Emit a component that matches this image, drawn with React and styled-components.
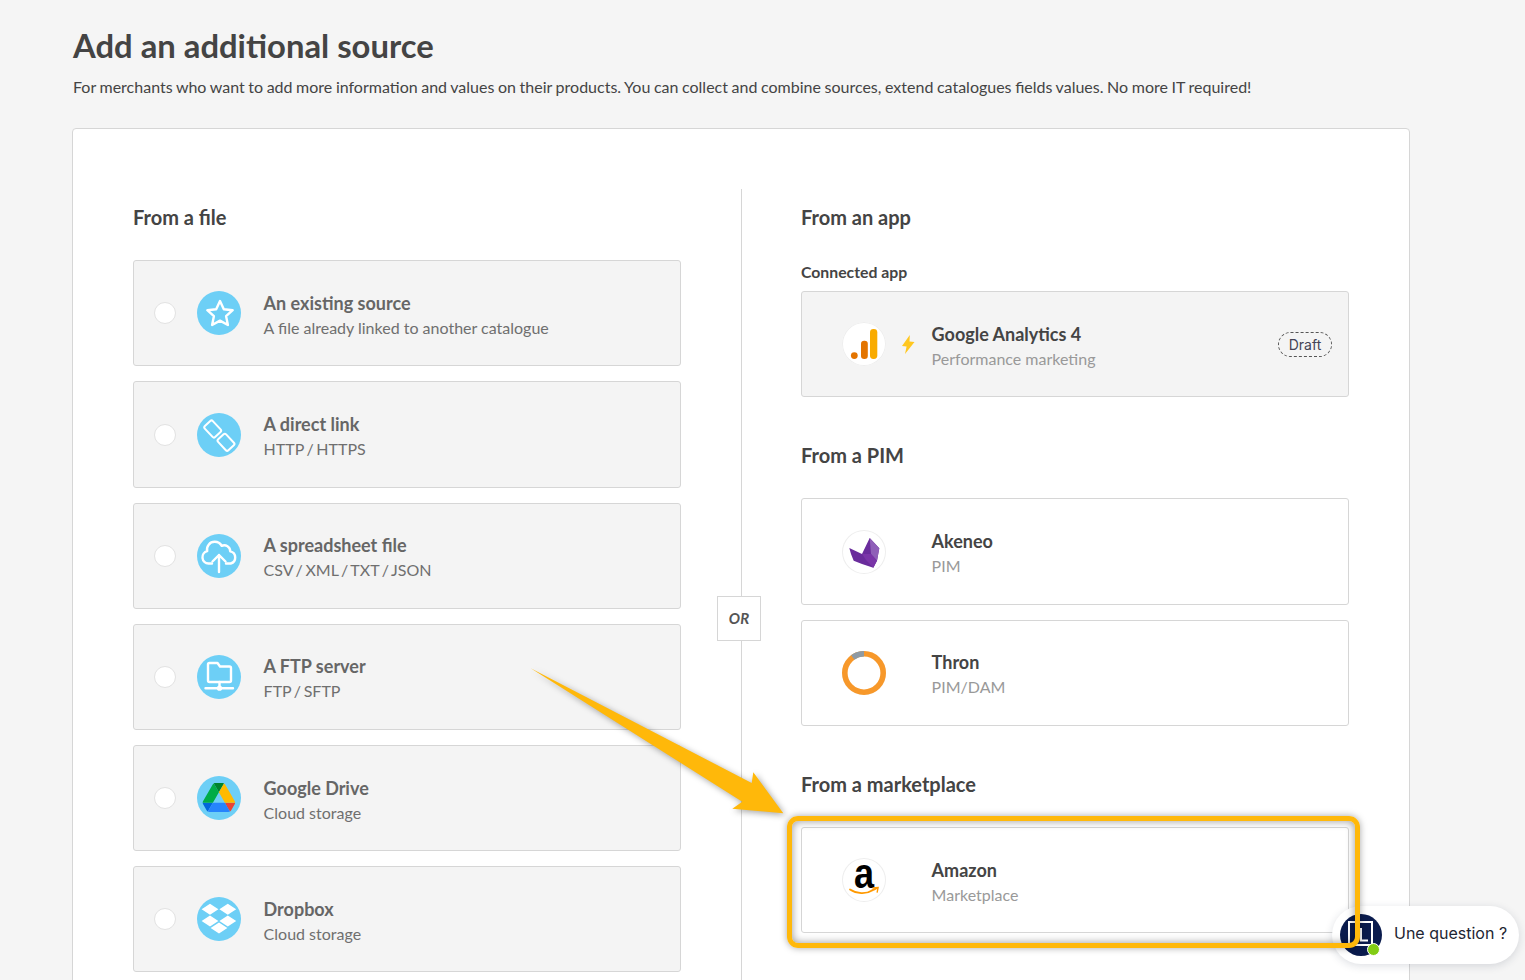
import React from "react";
import styled, { createGlobalStyle } from "styled-components";

const Global = createGlobalStyle`
  html, body { margin: 0; padding: 0; height: 980px; overflow: hidden; background: #f5f5f5; }
  body { font-family: Lato, "Liberation Sans", sans-serif; color: #444; }
  * { box-sizing: border-box; }
`;

const Page = styled.div`
  position: relative;
  height: 980px;
  overflow: hidden;
  padding: 26px 115px 0 72px;
`;
const Header = styled.header`
  padding-left: 1px;
`;
const Title = styled.h1`
  margin: 0;
  font-size: 32.8px;
  line-height: 40px;
  font-weight: 700;
  color: #444;
`;
const Lead = styled.p`
  margin: 10px 0 0;
  font-size: 16px;
  line-height: 22px;
  color: #444;
  word-spacing: -0.5px;
`;
const Panel = styled.section`
  margin-top: 30px;
  background: #fff;
  border: 1px solid #d6d6d6;
  border-radius: 4px;
  padding: 60px;
  display: grid;
  grid-template-columns: 548px 120px 548px;
  min-height: 980px;
`;
const Column = styled.div`
  padding-top: 15px;
  display: flex;
  flex-direction: column;
`;
const Divider = styled.div`
  position: relative;
  height: 858px;
  display: flex;
  justify-content: center;
  &::before {
    content: "";
    width: 1px;
    background: #d6d6d6;
  }
`;
const OrBox = styled.div`
  position: absolute;
  left: 36px;
  top: 407px;
  width: 44px;
  height: 45px;
  display: flex;
  align-items: center;
  justify-content: center;
  padding-bottom: 1px;
  background: #fff;
  border: 1px solid #d6d6d6;
  font-size: 15px;
  font-style: italic;
  font-weight: 700;
  color: #555;
`;
const Heading = styled.h2`
  margin: ${(p) => (p.$first ? "0" : "45px")} 0 30.3px;
  font-size: 20px;
  line-height: 26px;
  font-weight: 700;
  color: #444;
`;
const Label = styled.div`
  font-size: 15.8px;
  line-height: 18px;
  font-weight: 700;
  color: #444;
  padding-top: 3px;
  margin-bottom: 9.7px;
`;
const Stack = styled.div`
  display: flex;
  flex-direction: column;
  gap: 15px;
`;
const Card = styled.div`
  height: 106.2px;
  display: flex;
  align-items: center;
  padding: 0 16px 0 ${(p) => (p.$file ? 20 : 40)}px;
  border: 1px solid #d6d6d6;
  border-radius: 3px;
  background: ${(p) => (p.$muted ? "#f4f4f4" : "#fff")};
`;
const Radio = styled.span`
  flex: none;
  width: 22px;
  height: 22px;
  margin-right: 21px;
  border-radius: 50%;
  background: #fff;
  border: 1px solid #e2e2e2;
`;
const IconCircle = styled.span`
  flex: none;
  width: 44px;
  height: 44px;
  border-radius: 50%;
  display: block;
  background: ${(p) => (p.$blue ? "#6dcff6" : "#fff")};
  box-shadow: ${(p) => (p.$ring ? "inset 0 0 0 1px #eee" : "none")};
  svg { display: block; width: 44px; height: 44px; overflow: visible; }
`;
const Slot = styled.span`
  flex: none;
  width: ${(p) => p.$w}px;
  display: flex;
  align-items: center;
  justify-content: center;
`;
const Texts = styled.div`
  padding-top: 4px;
  min-width: 0;
`;
const Name = styled.div`
  font-size: 18px;
  line-height: 25px;
  font-weight: 700;
  color: ${(p) => (p.$muted ? "#666" : "#444")};
`;
const Sub = styled.div`
  font-size: 16px;
  line-height: 24px;
  word-spacing: ${(p) => p.$ws || 0}px;
  color: ${(p) => (p.$muted ? "#6f6f6f" : "#999")};
`;
const Draft = styled.span`
  margin-left: auto;
  width: 54px;
  height: 25px;
  display: flex;
  align-items: center;
  justify-content: center;
  border: 1px dashed #555;
  border-radius: 12.5px;
  font-family: Inter, sans-serif;
  font-size: 14px;
  color: #445;
`;
const Highlight = styled.div`
  position: absolute;
  left: 787px;
  top: 816px;
  width: 573px;
  height: 132px;
  border: 5px solid #ffb80a;
  border-radius: 11px;
  box-shadow: 0 0 7px rgba(0, 0, 0, 0.35), inset 0 0 8px rgba(0, 0, 0, 0.42);
  z-index: 3;
`;
const Arrow = styled.svg`
  position: absolute;
  left: 520px;
  top: 660px;
  z-index: 3;
  overflow: visible;
  filter: drop-shadow(2px 2px 3px rgba(0, 0, 0, 0.35));
`;
const Chat = styled.div`
  position: absolute;
  left: 1332px;
  top: 906px;
  width: 187px;
  height: 58px;
  border-radius: 29px;
  background: #fff;
  box-shadow: 0 2px 8px rgba(30, 40, 70, 0.15);
  display: flex;
  align-items: center;
  padding-left: 8px;
  z-index: 2;
`;
const Avatar = styled.span`
  position: relative;
  flex: none;
  width: 42px;
  height: 42px;
  margin-right: 12px;
  svg { display: block; }
`;
const Online = styled.i`
  position: absolute;
  right: 2px;
  bottom: 0;
  width: 13px;
  height: 13px;
  border-radius: 50%;
  background: #82cc14;
  border: 1.5px solid #fff;
`;
const ChatText = styled.span`
  font-family: Inter, sans-serif;
  font-size: 16px;
  color: #1e2533;
  white-space: nowrap;
  padding-bottom: 4px;
`;

const W = { fill: "none", stroke: "#fff", strokeWidth: 2.4, strokeLinecap: "round", strokeLinejoin: "round" };

const StarIcon = () => (
  <svg viewBox="0 0 44 44">
    <path {...W} d="M23 10l3.800 8.200 8.900 1-6.600 6 1.800 8.800-7.900-4.400-7.900 4.400 1.800-8.800-6.600-6 8.900-1z" />
  </svg>
);
const LinkIcon = () => (
  <svg viewBox="0 0 44 44">
    <g fill="none" stroke="#fff" strokeWidth="2" strokeLinejoin="round">
      <rect x="8.200" y="10.500" width="15" height="11" rx="1.800" transform="rotate(47 15.700 16)" />
      <rect x="21.500" y="23.800" width="15" height="11" rx="1.800" transform="rotate(47 29 29.300)" />
    </g>
  </svg>
);
const CloudIcon = () => (
  <svg viewBox="0 0 44 44">
    <g {...W}>
      <path d="M15 29.500h-3.500a6.300 6.300 0 0 1-1.300-12.400 7.600 7.600 0 0 1 7.500-9.300 8 8 0 0 1 7 4 6 6 0 0 1 8.500 5.500 6.300 6.300 0 0 1 .5 12.200H29" />
      <path d="M22 38V21M15.500 27.500L22 21l6.500 6.500" />
    </g>
  </svg>
);
const FtpIcon = () => (
  <svg viewBox="0 0 44 44">
    <g {...W}>
      <path d="M11 25.500V9.500A1.500 1.500 0 0 1 12.500 8h8l2.500 3.500h9.500a1.500 1.500 0 0 1 1.500 1.500v12.500a1.500 1.500 0 0 1-1.500 1.500h-20A1.500 1.500 0 0 1 11 25.500z" />
      <path d="M22.500 27v6M8.500 33.200h27.500" />
    </g>
    <circle cx="22.500" cy="33.200" r="2.600" fill="#fff" />
  </svg>
);
const DriveIcon = () => (
  <svg viewBox="0 0 44 44">
    <g transform="translate(5.7 7) scale(0.371)">
      <path d="m6.6 66.85 3.85 6.65c.8 1.4 1.95 2.5 3.3 3.3l13.75-23.8h-27.5c0 1.55.4 3.1 1.2 4.5z" fill="#0066da" />
      <path d="m43.65 25-13.75-23.8c-1.35.8-2.5 1.9-3.3 3.3l-25.4 44a9.06 9.06 0 0 0 -1.2 4.5h27.5z" fill="#00ac47" />
      <path d="m73.55 76.8c1.35-.8 2.5-1.9 3.3-3.3l1.6-2.75 7.65-13.25c.8-1.4 1.2-2.95 1.2-4.5h-27.502l5.852 11.5z" fill="#ea4335" />
      <path d="m43.65 25 13.75-23.8c-1.35-.8-2.9-1.2-4.5-1.2h-18.5c-1.6 0-3.15.45-4.5 1.2z" fill="#00832d" />
      <path d="m59.8 53h-32.3l-13.75 23.8c1.35.8 2.9 1.2 4.5 1.2h50.8c1.6 0 3.15-.45 4.5-1.2z" fill="#2684fc" />
      <path d="m73.4 26.5-12.7-22c-.8-1.4-1.95-2.5-3.3-3.3l-13.75 23.8 16.15 28h27.45c0-1.55-.4-3.1-1.2-4.5z" fill="#ffba00" />
    </g>
  </svg>
);
const DropboxIcon = () => (
  <svg viewBox="0 0 44 44" fill="#fff">
    <path d="M13 6.800l8.400 5.500L13 17.800l-8.400-5.500zM30.800 6.800l8.400 5.500-8.400 5.500-8.400-5.500zM13 18.400l8.400 5.500-8.400 5.500-8.400-5.500zM30.800 18.400l8.400 5.500-8.400 5.500-8.400-5.500zM22 25.600l8.400 5.400-8.400 5.500-8.400-5.500z" />
  </svg>
);
const GaIcon = () => (
  <svg viewBox="0 0 44 44">
    <circle cx="12.300" cy="33.600" r="3.400" fill="#e37400" />
    <rect x="19" y="18.700" width="6.800" height="18.300" rx="3.200" fill="#e37400" />
    <rect x="28" y="7" width="7.300" height="30" rx="3.400" fill="#f9ab00" />
  </svg>
);
const Bolt = () => (
  <svg width="13" height="19" viewBox="0 0 13 19">
    <path d="M7.800 0L0 11l4.600.4L3 19l9.500-12-5-.4z" fill="#ffc71f" />
  </svg>
);
const AkeneoIcon = () => (
  <svg viewBox="0 0 44 44">
    <path d="M7.300 18L20 24 27.700 8 37.300 18.300 35 30.700 31.300 37.700 20 34 11.700 30.700 9 24z" fill="#6a2c9c" />
    <path d="M27.700 8L37.300 18.300 35 30.700 29 24z" fill="#8f5fb8" />
    <path d="M20 24L29 24 35 30.700 31.300 37.700 24 30z" fill="#7a35a8" />
  </svg>
);
const ThronIcon = () => (
  <svg viewBox="0 0 44 44" fill="none">
    <circle cx="22" cy="22" r="19.200" stroke="#f7982a" strokeWidth="5.600" />
    <path d="M22 2.800A19.200 19.200 0 0 0 10.800 6.400" stroke="#8f9aa3" strokeWidth="5.600" />
  </svg>
);
const AmazonIcon = () => (
  <svg viewBox="0 0 44 44">
    <text x="0" y="0" transform="translate(22 30) scale(0.86 1)" textAnchor="middle" fontFamily="Liberation Sans, sans-serif" fontWeight="700" fontSize="42" fill="#000">a</text>
    <path d="M8 31.500c6.500 4.300 16 4.900 22 .9" fill="none" stroke="#f90" strokeWidth="1.800" strokeLinecap="round" />
    <path d="M30.500 30l5.600-.4-1 5" fill="none" stroke="#f90" strokeWidth="1.400" />
    <path d="M30 32.400c2-.8 3.600-1.700 5.500-2.800" fill="none" stroke="#f90" strokeWidth="1.800" />
  </svg>
);

const files = [
  { n: "An existing source", s: "A file already linked to another catalogue", I: StarIcon },
  { n: "A direct link", s: "HTTP / HTTPS", I: LinkIcon, ws: -1.5 },
  { n: "A spreadsheet file", s: "CSV / XML / TXT / JSON", I: CloudIcon, ws: -1.5 },
  { n: "A FTP server", s: "FTP / SFTP", I: FtpIcon, ws: -1.5 },
  { n: "Google Drive", s: "Cloud storage", I: DriveIcon },
  { n: "Dropbox", s: "Cloud storage", I: DropboxIcon },
];

const AppCard = ({ I, name, sub, muted, bolt, badge }) => (
  <Card $muted={muted}>
    <IconCircle $ring><I /></IconCircle>
    <Slot $w={45.6}>{bolt && <Bolt />}</Slot>
    <Texts>
      <Name>{name}</Name>
      <Sub>{sub}</Sub>
    </Texts>
    {badge && <Draft>{badge}</Draft>}
  </Card>
);

export default function App() {
  return (
    <Page>
      <Global />
      <Header>
        <Title>Add an additional source</Title>
        <Lead>
          For merchants who want to add more information and values on their products. You can collect and combine sources, extend catalogues fields values. No more IT required!
        </Lead>
      </Header>
      <Panel>
        <Column>
          <Heading $first>From a file</Heading>
          <Stack>
            {files.map(({ n, s, I, ws }) => (
              <Card key={n} $file $muted>
                <Radio />
                <IconCircle $blue><I /></IconCircle>
                <Slot $w={22.6} />
                <Texts>
                  <Name $muted>{n}</Name>
                  <Sub $muted $ws={ws}>{s}</Sub>
                </Texts>
              </Card>
            ))}
          </Stack>
        </Column>
        <Divider>
          <OrBox>OR</OrBox>
        </Divider>
        <Column>
          <Heading $first>From an app</Heading>
          <Label>Connected app</Label>
          <AppCard I={GaIcon} name="Google Analytics 4" sub="Performance marketing" muted bolt badge="Draft" />
          <Heading>From a PIM</Heading>
          <Stack>
            <AppCard I={AkeneoIcon} name="Akeneo" sub="PIM" />
            <AppCard I={ThronIcon} name="Thron" sub="PIM/DAM" />
          </Stack>
          <Heading>From a marketplace</Heading>
          <AppCard I={AmazonIcon} name="Amazon" sub="Marketplace" />
        </Column>
      </Panel>
      <Arrow width="270" height="160" viewBox="520 660 270 160">
        <polygon points="530.7,668.3 751.7,783 753.3,772.3 783.3,813.3 732.3,808.7 742.3,801.7" fill="#ffb80a" />
      </Arrow>
      <Highlight />
      <Chat>
        <Avatar>
          <svg width="42" height="42" viewBox="0 0 42 42">
            <circle cx="21" cy="21" r="21" fill="#0a1b4d" />
            <g fill="none" stroke="#fff" strokeWidth="2">
              <rect x="9" y="8" width="23" height="23" />
              <path d="M21 14v12.500h7" />
            </g>
          </svg>
          <Online />
        </Avatar>
        <ChatText>Une question ?</ChatText>
      </Chat>
    </Page>
  );
}
